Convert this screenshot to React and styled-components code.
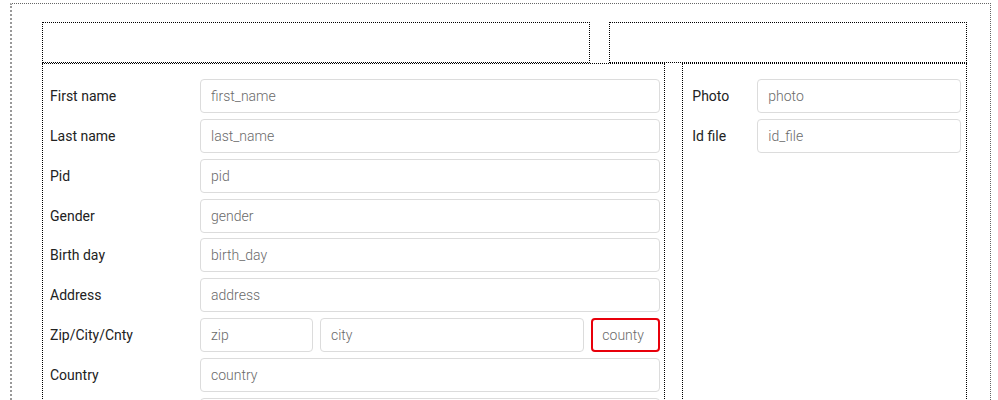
import React from "react";
import styled, { createGlobalStyle } from "styled-components";

const Global = createGlobalStyle`
  html, body { margin: 0; padding: 0; background: #fff; }
  body { font-family: Roboto, "Liberation Sans", sans-serif; font-size: 14px; color: #222; }
  * { box-sizing: border-box; }
`;

const Outer = styled.div`
  margin: 3px 0 0 10px;
  width: 981px;
  min-height: 420px;
  border: 1px dotted #666;
  border-left: 2px dotted #999;
  padding: 18px 23px 0 30px;
`;

const Row = styled.div`
  display: flex;
  gap: ${(p) => p.$gap}px;
`;

const Box = styled.div`
  border: 1px dotted #000;
  width: ${(p) => p.$w}px;
  height: ${(p) => (p.$h ? `${p.$h}px` : "auto")};
  min-height: ${(p) => (p.$minH ? `${p.$minH}px` : "0")};
  padding: ${(p) => p.$pad || "0"};
`;

const FormRow = styled.div`
  display: grid;
  grid-template-columns: ${(p) => p.$label}px 1fr;
  align-items: center;
  margin-bottom: 5.85px;
`;

const Label = styled.label`
  font-size: 14px;
  color: #222;
`;

const Inputs = styled.div`
  display: flex;
  gap: 7px;
`;

const Input = styled.input`
  display: block;
  height: 34px;
  width: ${(p) => (p.$w ? `${p.$w}px` : "100%")};
  min-width: 0;
  flex: ${(p) => (p.$w ? "none" : "1")};
  border: ${(p) => (p.$invalid ? "2px solid #e8000b" : "1px solid #dcdcdc")};
  border-radius: 4px;
  padding: 0 ${(p) => (p.$invalid ? 9 : 10)}px;
  font-family: Roboto, "Liberation Sans", sans-serif;
  font-size: 14px;
  color: #444;
  background: #fff;
  outline: none;
  &::placeholder { color: #6a6a6a; font-weight: 300; }
`;

const leftFields = [
  ["First name", "first_name"],
  ["Last name", "last_name"],
  ["Pid", "pid"],
  ["Gender", "gender"],
  ["Birth day", "birth_day"],
  ["Address", "address"],
];

export default function App() {
  return (
    <>
      <Global />
      <Outer>
        <Row $gap={19}>
          <Box $w={549} $h={41} />
          <Box $w={358} $h={41} />
        </Row>
        <Row $gap={17}>
          <Box $w={624} $minH={400} $pad="15px 4px 0 7px">
            {leftFields.map(([l, p]) => (
              <FormRow key={p} $label={150}>
                <Label>{l}</Label>
                <Input placeholder={p} />
              </FormRow>
            ))}
            <FormRow $label={150}>
              <Label>Zip/City/Cnty</Label>
              <Inputs>
                <Input $w={113} placeholder="zip" />
                <Input placeholder="city" />
                <Input $w={69} $invalid placeholder="county" />
              </Inputs>
            </FormRow>
            <FormRow $label={150}>
              <Label>Country</Label>
              <Input placeholder="country" />
            </FormRow>
            <FormRow $label={150}>
              <Label>Email</Label>
              <Input placeholder="email" />
            </FormRow>
          </Box>
          <Box $w={285} $minH={400} $pad="15px 5px 0 9px">
            <FormRow $label={65}>
              <Label>Photo</Label>
              <Input placeholder="photo" />
            </FormRow>
            <FormRow $label={65}>
              <Label>Id file</Label>
              <Input placeholder="id_file" />
            </FormRow>
          </Box>
        </Row>
      </Outer>
    </>
  );
}
